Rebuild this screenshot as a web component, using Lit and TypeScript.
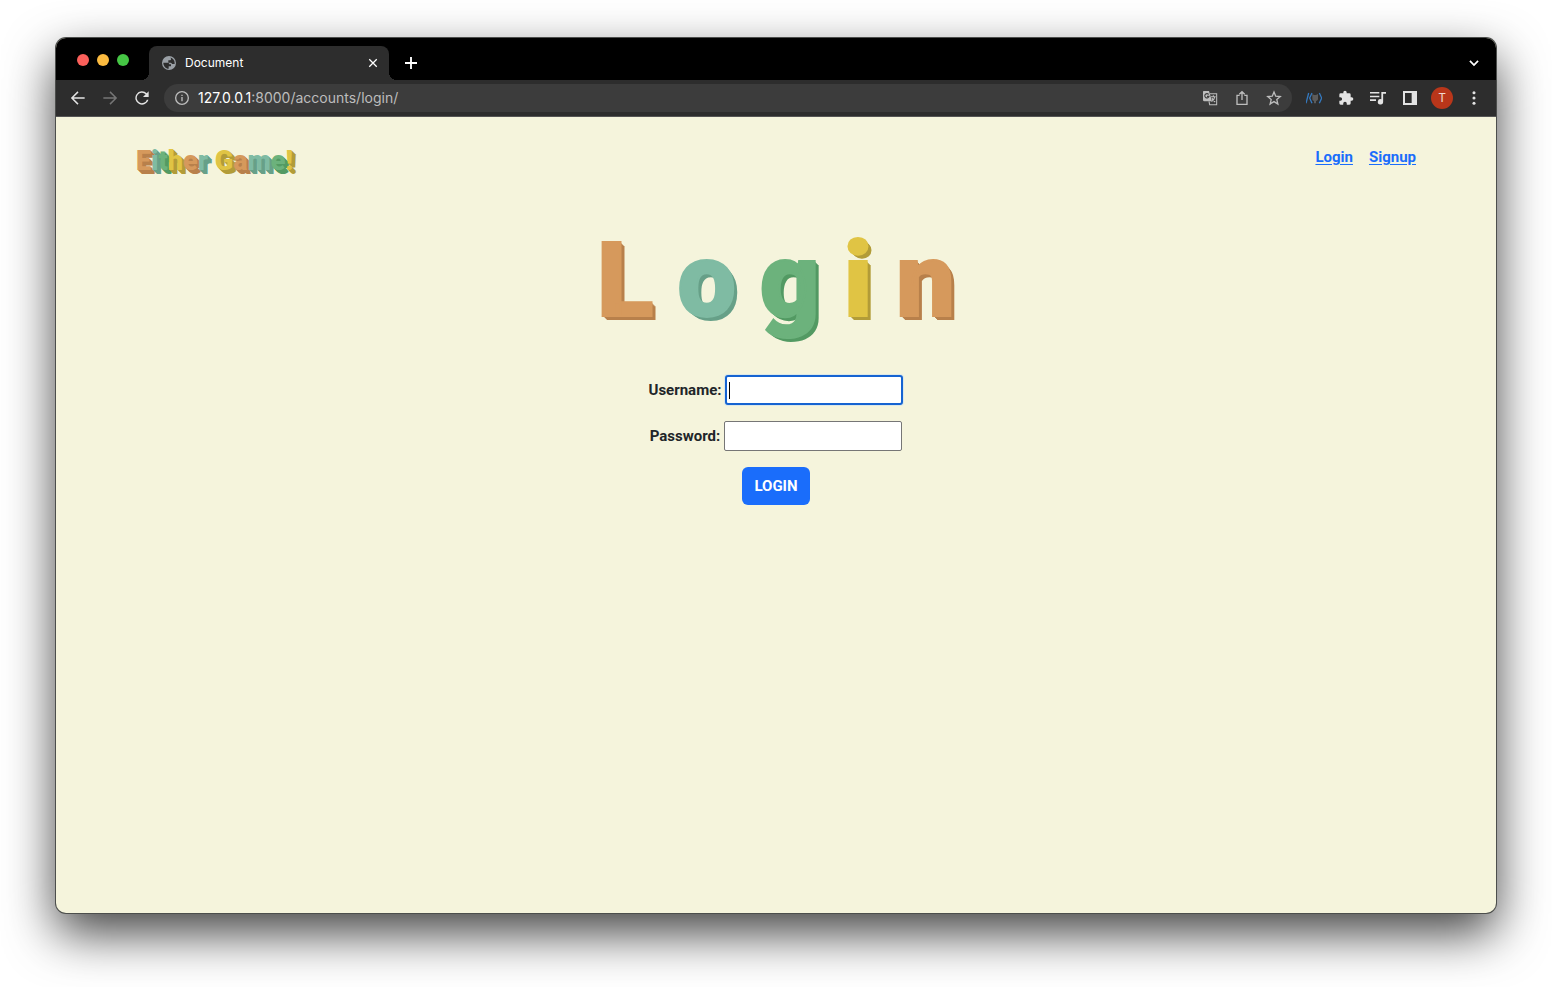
import { LitElement, html, css, svg } from "lit";
import { customElement, property } from "lit/decorators.js";

const TONES = ["clay", "mint", "leaf", "gold"];

const icons: Record<string, unknown> = {
  globe: svg`<path fill="currentColor" d="M12 1.500a10.500 10.500 0 1 0 0 21 10.500 10.500 0 0 0 0-21zM3.500 11.500h6c2 0 3 1 3 2.500h2.500v3h-3.500v3.500C7 20.500 3.500 16.500 3.500 11.500zM14 3.800c3.800.9 6.500 4.200 6.500 8.200 0 .5 0 1-.1 1.500H18c-1.800 0-2-2-3.500-2H11V8h2.500c1 0 1.500-.6 1.500-1.500V5.500z" fill-rule="evenodd"/>`,
  close: svg`<path fill="none" stroke="currentColor" stroke-width="2.600" d="M4.500 4.500l15 15M19.500 4.500l-15 15"/>`,
  plus: svg`<path fill="none" stroke="currentColor" stroke-width="2.800" d="M12 3v18M3 12h18"/>`,
  chevron: svg`<path fill="none" stroke="currentColor" stroke-width="3" d="M5 8.500l7 7 7-7"/>`,
  back: svg`<path fill="none" stroke="currentColor" stroke-width="2.200" d="M22 12H3.500M12 2.800L2.800 12l9.200 9.200"/>`,
  forward: svg`<path fill="none" stroke="currentColor" stroke-width="2.200" d="M2 12h18.500M12 2.800l9.200 9.200-9.200 9.200"/>`,
  reload: svg`<path fill="currentColor" d="M19.100 4.900A10 10 0 1 0 21.700 14.500h-2.400A7.800 7.800 0 1 1 17.500 6.500L13.500 10.500H22V2z"/>`,
  info: svg`<circle cx="12" cy="12" r="9.500" fill="none" stroke="currentColor" stroke-width="2"/><path fill="currentColor" d="M11 10.500h2V17h-2zM11 7h2v2h-2z"/>`,
  translate: svg`<path fill="currentColor" d="M2.500 1.500h8L15 17H3.500a2 2 0 0 1-2-2V2.500a1 1 0 0 1 1-1z"/><path fill="none" stroke="#3c3c3c" stroke-width="1.700" d="M10 6.800A3.200 3.200 0 1 0 10.500 9.500H7.500"/><path fill="none" stroke="currentColor" stroke-width="1.600" d="M12 5.500h10v16.500H11.500L10.500 17M13.500 10h7M17 8v2M19.300 10c-.7 3.500-2.500 6-5 7.500M15 12c1 2.500 2.500 4.300 4.800 6"/>`,
  share: svg`<path fill="none" stroke="currentColor" stroke-width="2" d="M8.500 8H4.500v13.500h15V8h-4M12 15V2.500M8 6.500l4-4 4 4"/>`,
  star: svg`<path fill="none" stroke="currentColor" stroke-width="2" d="M12 3l2.600 6.300 6.800.6-5.200 4.400 1.600 6.700L12 17.400 6.200 21l1.600-6.700L2.600 9.900l6.800-.6z"/>`,
  code: svg`<path fill="none" stroke="#3578bd" stroke-width="2" d="M4 4.500L0 20M9 4.500L5.500 12 9 20M20 4.500l3.500 7.500-3.500 8"/><path fill="#5c5c5c" d="M9.500 6l2.500 1.500h3L18 6v7c0 2-1.500 3-3 3.500V20h-3v-3.500c-1.500-.5-2.500-1.500-2.500-3.500z"/>`,
  puzzle: svg`<path fill="currentColor" d="M20.500 11H19V7a2 2 0 0 0-2-2h-4V3.500a2.500 2.500 0 0 0-5 0V5H4a2 2 0 0 0-2 2v3.800h1.500a2.700 2.700 0 0 1 0 5.400H2V20a2 2 0 0 0 2 2h3.800v-1.500a2.700 2.700 0 0 1 5.400 0V22H17a2 2 0 0 0 2-2v-4h1.500a2.500 2.500 0 0 0 0-5z"/>`,
  queue: svg`<path fill="currentColor" d="M0 3h14v2.400H0zM0 8.500h14v2.400H0zM0 14h9v2.400H0zM17 3h7v2.600h-4.300V17.500a4 4 0 1 1-2.700-3.700z"/>`,
  panel: svg`<path fill="currentColor" fill-rule="evenodd" d="M1.500 1.500h21v21h-21zM4.500 4.500v15h10v-15z"/>`,
  more: svg`<circle cx="12" cy="4" r="2.300" fill="currentColor"/><circle cx="12" cy="12" r="2.300" fill="currentColor"/><circle cx="12" cy="20" r="2.300" fill="currentColor"/>`,
};

const icon = (name: string) =>
  html`<svg class="icon" viewBox="0 0 24 24" aria-hidden="true">${icons[name]}</svg>`;

@customElement("block-letters")
export class BlockLetters extends LitElement {
  @property() text = "";
  @property({ reflect: true }) size = "large";

  static styles = css`
    :host { display: flex; font-family: Roboto, sans-serif; font-weight: 900; white-space: pre; }
    :host([size="large"]) { font-size: 104px; line-height: 132px; gap: 24px; -webkit-text-stroke: 2px; }
    :host([size="small"]) { font-size: 27px; line-height: 32px; }
    .clay { color: #d6995c; --edge: #b8804b; }
    .mint { color: #7fbba3; --edge: #67a088; }
    .leaf { color: #6cb27c; --edge: #539a63; }
    .gold { color: #e0c444; --edge: #b29c38; }
    .letter {
      text-shadow: 1px 1px var(--edge), 2px 2px var(--edge), 3px 3px var(--edge), 4px 4px var(--edge);
    }
  `;

  render() {
    return [...this.text].map((ch, i) => html`<span class="letter ${TONES[i % 4]}">${ch}</span>`);
  }
}

@customElement("browser-chrome")
export class BrowserChrome extends LitElement {
  static styles = css`
    :host { display: block; color: #e3e3e3; font-family: Inter, sans-serif; }
    button { appearance: none; border: 0; padding: 0; margin: 0; background: none; color: inherit; font: inherit; }
    .icon { display: block; width: 16px; height: 16px; }
    .strip { display: flex; height: 42px; padding: 0 8px 0 21px; background: #000; }
    .lights { display: flex; gap: 8px; padding-top: 16px; margin-right: 20px; }
    .light { width: 12px; height: 12px; border-radius: 50%; }
    .red { background: #fb605b; }
    .amber { background: #fcbb40; }
    .green { background: #46c645; }
    .tab {
      position: relative; box-sizing: border-box; display: flex; align-items: center; gap: 8px;
      width: 240px; height: 34px; margin-top: 8px; padding: 0 10px 0 12px;
      border-radius: 8px 8px 0 0; background: #2d2d2d; color: #fff; font-size: 12px; line-height: 16px;
    }
    .tab::before, .tab::after { content: ""; position: absolute; bottom: 0; width: 8px; height: 8px; }
    .tab::before { left: -8px; background: radial-gradient(circle at 0 0, transparent 8px, #2d2d2d 8px); }
    .tab::after { right: -8px; background: radial-gradient(circle at 100% 0, transparent 8px, #2d2d2d 8px); }
    .tab-title { flex: 1; }
    .tab > .icon { color: #9aa0a6; }
    .tab button .icon { width: 12px; height: 12px; }
    .add { align-self: center; margin: 8px auto 0 14px; color: #fff; }
    .tool { display: grid; place-items: center; width: 28px; height: 28px; flex: none; }
    .search { align-self: center; margin-top: 8px; color: #fff; }
    .search .icon { width: 14px; height: 14px; }
    .bar { display: flex; align-items: center; gap: 4px; height: 36px; padding: 0 8px; background: #2d2d2d; border-bottom: 1px solid #555; }
    .dim { color: #757575; }
    .address {
      box-sizing: border-box; flex: 1; display: flex; align-items: center; gap: 4px; height: 28px; margin: 0 4px;
      padding: 0 4px; border-radius: 14px; background: #3c3c3c; color: #bdbdbd;
    }
    .url { flex: 1; margin-left: -2px; font: 14px/20px Inter, sans-serif; }
    .host { color: #fff; }
    .avatar { width: 22px; height: 22px; border-radius: 50%; background: #b9361a; color: #f0d8d0; font-size: 12px; line-height: 22px; }
  `;

  render() {
    const tool = (name: string, label: string, extra = "") =>
      html`<button class="tool ${extra}" aria-label=${label}>${icon(name)}</button>`;
    return html`
      <div class="strip">
        <div class="lights"><i class="light red"></i><i class="light amber"></i><i class="light green"></i></div>
        <div class="tab">${icon("globe")}<span class="tab-title">Document</span><button aria-label="Close tab">${icon("close")}</button></div>
        <button class="add" aria-label="New tab">${icon("plus")}</button>
        ${tool("chevron", "Search tabs", "search")}
      </div>
      <div class="bar">
        ${tool("back", "Back")}${tool("forward", "Forward", "dim")}${tool("reload", "Reload")}
        <div class="address">
          ${tool("info", "Site information")}
          <div class="url" role="textbox" contenteditable="true" spellcheck="false" aria-label="Address"><span class="host">127.0.0.1</span>:8000/accounts/login/</div>
          ${tool("translate", "Translate")}${tool("share", "Share")}${tool("star", "Bookmark")}
        </div>
        ${tool("code", "Code extension")}${tool("puzzle", "Extensions")}${tool("queue", "Media")}${tool("panel", "Side panel")}
        <button class="tool" aria-label="Profile"><span class="avatar">T</span></button>
        ${tool("more", "Menu")}
      </div>
    `;
  }
}

@customElement("app-root")
export class AppRoot extends LitElement {
  static styles = css`
    :host { box-sizing: border-box; display: flex; min-height: 100vh; padding: 38px 56px 74px; background: #fff; overflow: hidden; }
    .window {
      flex: 1; display: flex; flex-direction: column; overflow: hidden; border-radius: 10px; background: #f5f4dc;
      box-shadow: 0 0 0 1px #4c4e4c, 0 20px 50px rgba(0, 0, 0, 0.75);
    }
    .page { flex: 1; color: #212529; font: bold 15px/24px Roboto, sans-serif; }
    .header { display: flex; justify-content: space-between; align-items: flex-start; padding: 28px 80px 0; }
    .brand { text-decoration: none; }
    .nav { display: flex; gap: 16px; }
    .nav a { color: #1a6dfb; text-underline-offset: 2px; }
    .title { display: flex; justify-content: center; margin: 38px 0 0; font: inherit; }
    .form { display: flex; flex-direction: column; align-items: center; gap: 16px; margin-top: 28px; }
    .field { display: flex; align-items: center; gap: 4px; }
    .input {
      box-sizing: border-box; width: 178px; height: 30px; padding: 1px 2px; border: 1px solid #767676; border-radius: 2px;
      background-color: #fff; font: inherit; outline: none;
    }
    .active {
      border: 2px solid #1563d1; border-radius: 3px; box-shadow: 0 0 0 1px #dbe8e8; caret-color: transparent;
      background: linear-gradient(#000, #000) 2px center / 1px 17px no-repeat #fff;
    }
    .submit { height: 38px; padding: 0 12px; border: 0; border-radius: 6px; background: #1a6dfb; color: #fff; font: inherit; }
  `;

  render() {
    return html`
      <div class="window">
        <browser-chrome></browser-chrome>
        <div class="page">
          <header class="header">
            <a class="brand" href="#"><block-letters size="small" text="Either Game!"></block-letters></a>
            <nav class="nav"><a href="#login">Login</a><a href="#signup">Signup</a></nav>
          </header>
          <main>
            <h1 class="title"><block-letters text="Login"></block-letters></h1>
            <form class="form" @submit=${(e: Event) => e.preventDefault()}>
              <div class="field"><label for="username">Username:</label><input class="input active" id="username" type="text" /></div>
              <div class="field"><label for="password">Password:</label><input class="input" id="password" type="password" /></div>
              <button class="submit" type="submit">LOGIN</button>
            </form>
          </main>
        </div>
      </div>
    `;
  }
}
